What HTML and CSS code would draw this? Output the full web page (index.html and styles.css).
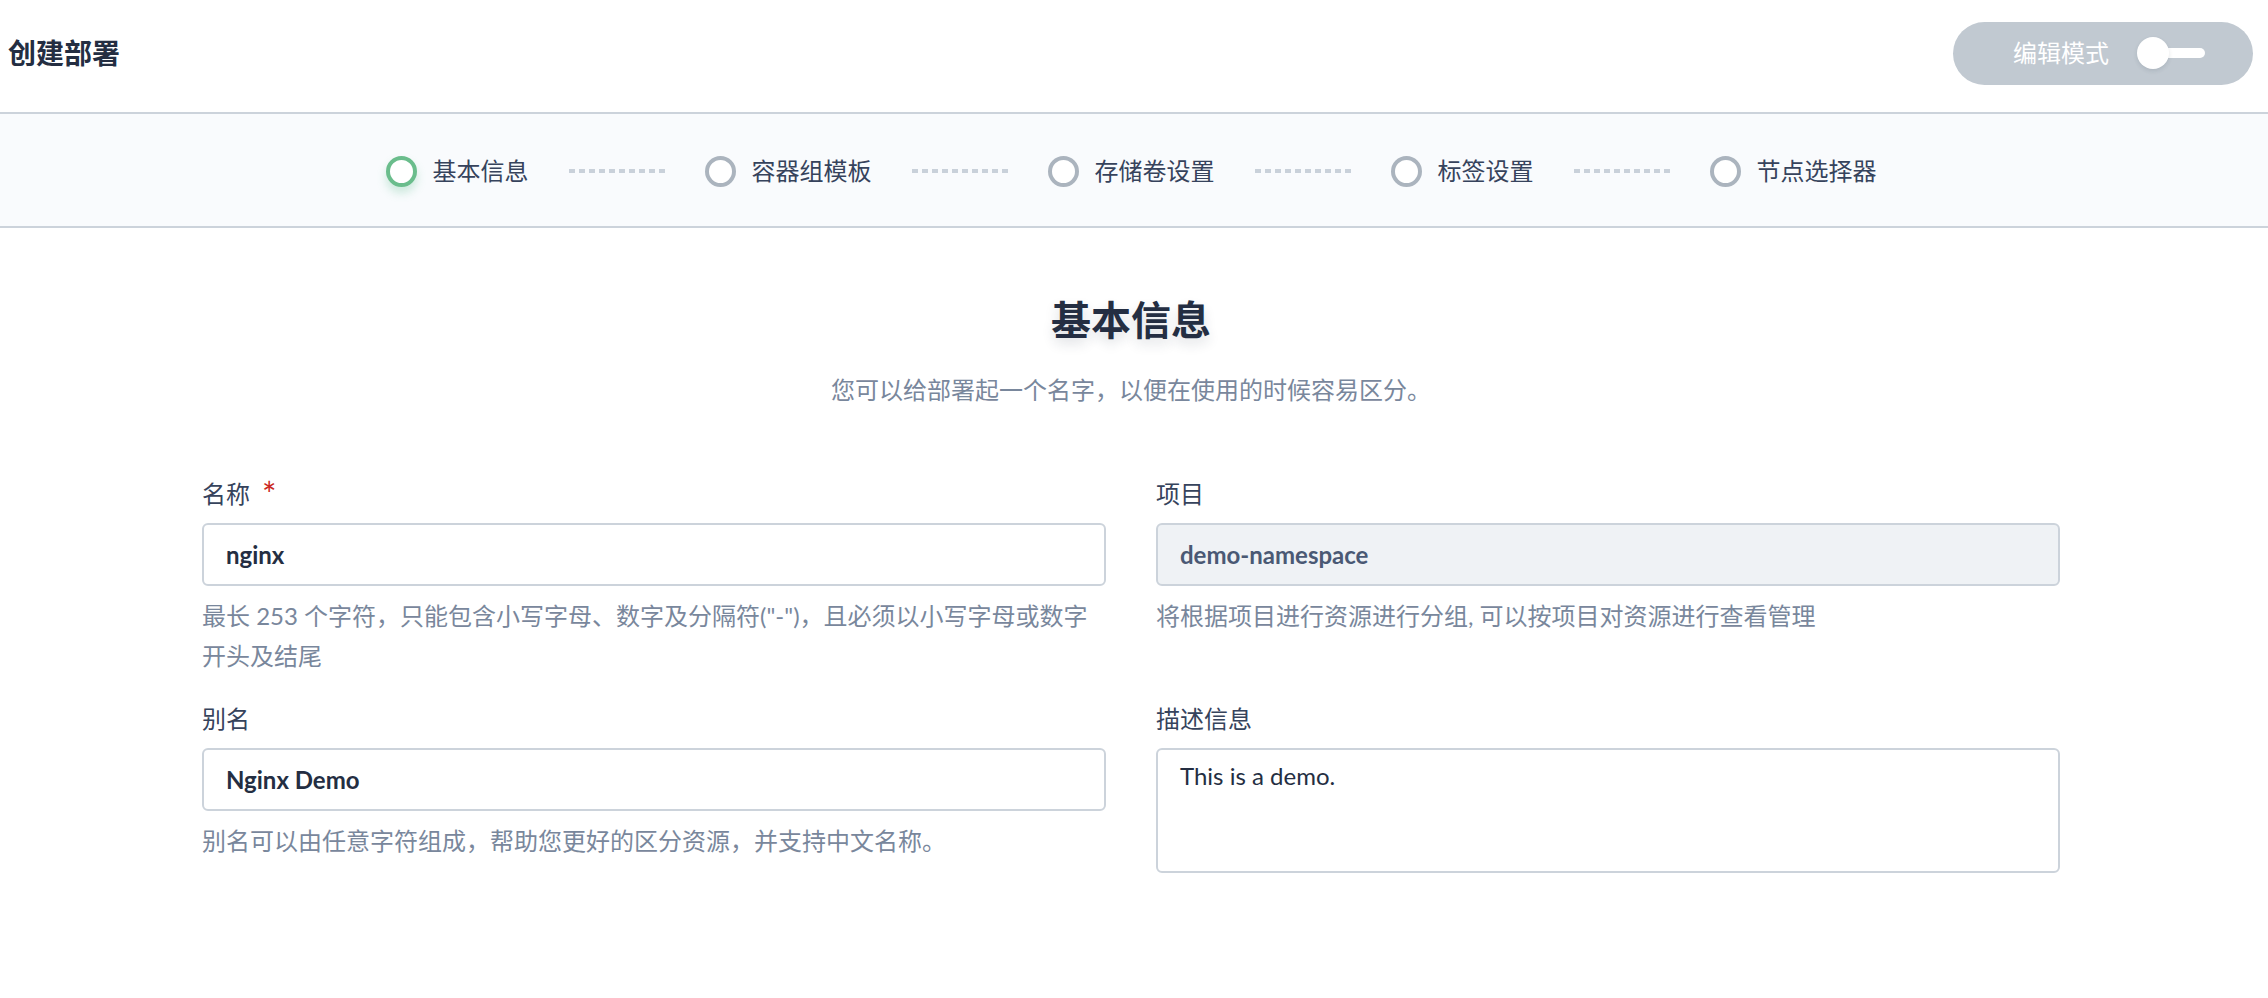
FILE: index.html
```html
<!DOCTYPE html>
<html lang="zh-CN">
<head>
<meta charset="utf-8">
<title>创建部署</title>
<link rel="stylesheet" href="styles.css">
</head>
<body>
<header class="header">
  <div class="header-title">创建部署</div>
  <div class="mode-btn">
    <span class="mode-text">编辑模式</span>
    <span class="switch"><span class="knob"></span><span class="track"></span></span>
  </div>
</header>
<nav class="steps">
  <div class="step active"><span class="step-dot"></span><span class="step-label">基本信息</span></div>
  <span class="step-sep"></span>
  <div class="step"><span class="step-dot"></span><span class="step-label">容器组模板</span></div>
  <span class="step-sep"></span>
  <div class="step"><span class="step-dot"></span><span class="step-label">存储卷设置</span></div>
  <span class="step-sep"></span>
  <div class="step"><span class="step-dot"></span><span class="step-label">标签设置</span></div>
  <span class="step-sep"></span>
  <div class="step"><span class="step-dot"></span><span class="step-label">节点选择器</span></div>
</nav>
<main class="main">
  <h1 class="page-title">基本信息</h1>
  <p class="page-sub">您可以给部署起一个名字，以便在使用的时候容易区分。</p>
  <div class="form">
    <div class="field">
      <div class="label">名称<span class="required">*</span></div>
      <div class="input">nginx</div>
      <div class="help">最长 253 个字符，只能包含小写字母、数字及分隔符("-")，且必须以小写字母或数字开头及结尾</div>
    </div>
    <div class="field">
      <div class="label">项目</div>
      <div class="input disabled">demo-namespace</div>
      <div class="help">将根据项目进行资源进行分组, 可以按项目对资源进行查看管理</div>
    </div>
    <div class="field">
      <div class="label">别名</div>
      <div class="input">Nginx Demo</div>
      <div class="help">别名可以由任意字符组成，帮助您更好的区分资源，并支持中文名称。</div>
    </div>
    <div class="field">
      <div class="label">描述信息</div>
      <div class="textarea">This is a demo.</div>
    </div>
  </div>
</main>
</body>
</html>
```
FILE: styles.css
```css
* { box-sizing: border-box; }
html, body { margin: 0; padding: 0; background: #fff; }
body {
  font-family: Lato, "Noto Sans CJK SC", sans-serif;
  font-size: 24px;
  line-height: 40px;
  color: #242e42;
}

.header {
  height: 114px;
  border-bottom: 2px solid #ccd3db;
  display: flex;
  align-items: center;
  justify-content: space-between;
  padding: 0 15px 6px 8px;
}
.header-title {
  font-size: 28px;
  font-weight: 700;
  color: #242e42;
  line-height: 40px;
}
.mode-btn {
  width: 300px;
  height: 63px;
  border-radius: 32px;
  background: #c1c9d1;
  display: flex;
  align-items: center;
  padding-left: 60px;
  color: #fff;
  font-size: 24px;
}
.switch {
  display: flex;
  align-items: center;
  margin-left: 28px;
}
.knob {
  width: 32px;
  height: 32px;
  border-radius: 50%;
  background: #fff;
  box-shadow: 0 2px 4px rgba(36, 46, 66, 0.12);
  position: relative;
  z-index: 1;
}
.track {
  width: 44px;
  height: 10px;
  border-radius: 5px;
  background: #fff;
  margin-left: -8px;
}

.steps {
  height: 114px;
  border-bottom: 2px solid #ccd3db;
  background: #f9fbfd;
  display: flex;
  align-items: center;
  justify-content: center;
  padding: 2px 6px 0 0;
}
.step {
  display: flex;
  align-items: center;
}
.step-dot {
  width: 31px;
  height: 31px;
  border-radius: 50%;
  border: 4px solid #abb4be;
  background: #fff;
}
.step.active .step-dot {
  border-color: #6abd8c;
  box-shadow: 0 6px 10px rgba(85, 188, 138, 0.28);
}
.step-label {
  margin-left: 16px;
  color: #36435c;
  font-size: 24px;
}
.step-sep {
  width: 96px;
  height: 4px;
  margin: 0 40px;
  background: repeating-linear-gradient(90deg, #c9d1da 0 6px, transparent 6px 10px);
}

.main {
  width: 1858px;
  margin-left: 202px;
  padding-top: 64px;
}
.page-title {
  margin: 0;
  text-align: center;
  font-size: 40px;
  line-height: 56px;
  font-weight: 700;
  color: #242e42;
  text-shadow: 0 6px 12px rgba(36, 46, 66, 0.15);
}
.page-sub {
  margin: 22px 0 0;
  text-align: center;
  color: #79879c;
  font-size: 24px;
  line-height: 40px;
}
.form {
  margin-top: 64px;
  display: grid;
  grid-template-columns: 1fr 1fr;
  column-gap: 50px;
  row-gap: 23px;
}
.label {
  line-height: 40px;
  color: #36435c;
  margin-bottom: 9px;
}
.required {
  color: #ca2621;
  margin-left: 12px;
  font-size: 34px;
  vertical-align: top;
  line-height: 40px;
}
.input {
  height: 63px;
  border: 2px solid #ccd3db;
  border-radius: 6px;
  padding: 0 22px;
  display: flex;
  align-items: center;
  font-weight: 700;
  color: #242e42;
  background: #fff;
}
.input.disabled {
  background: #eff2f5;
  color: #4a5974;
}
.textarea {
  height: 125px;
  border: 2px solid #ccd3db;
  border-radius: 6px;
  padding: 12px 22px;
  line-height: 28px;
  color: #242e42;
  background: #fff;
}
.help {
  margin-top: 10px;
  color: #79879c;
  line-height: 40px;
}
```
